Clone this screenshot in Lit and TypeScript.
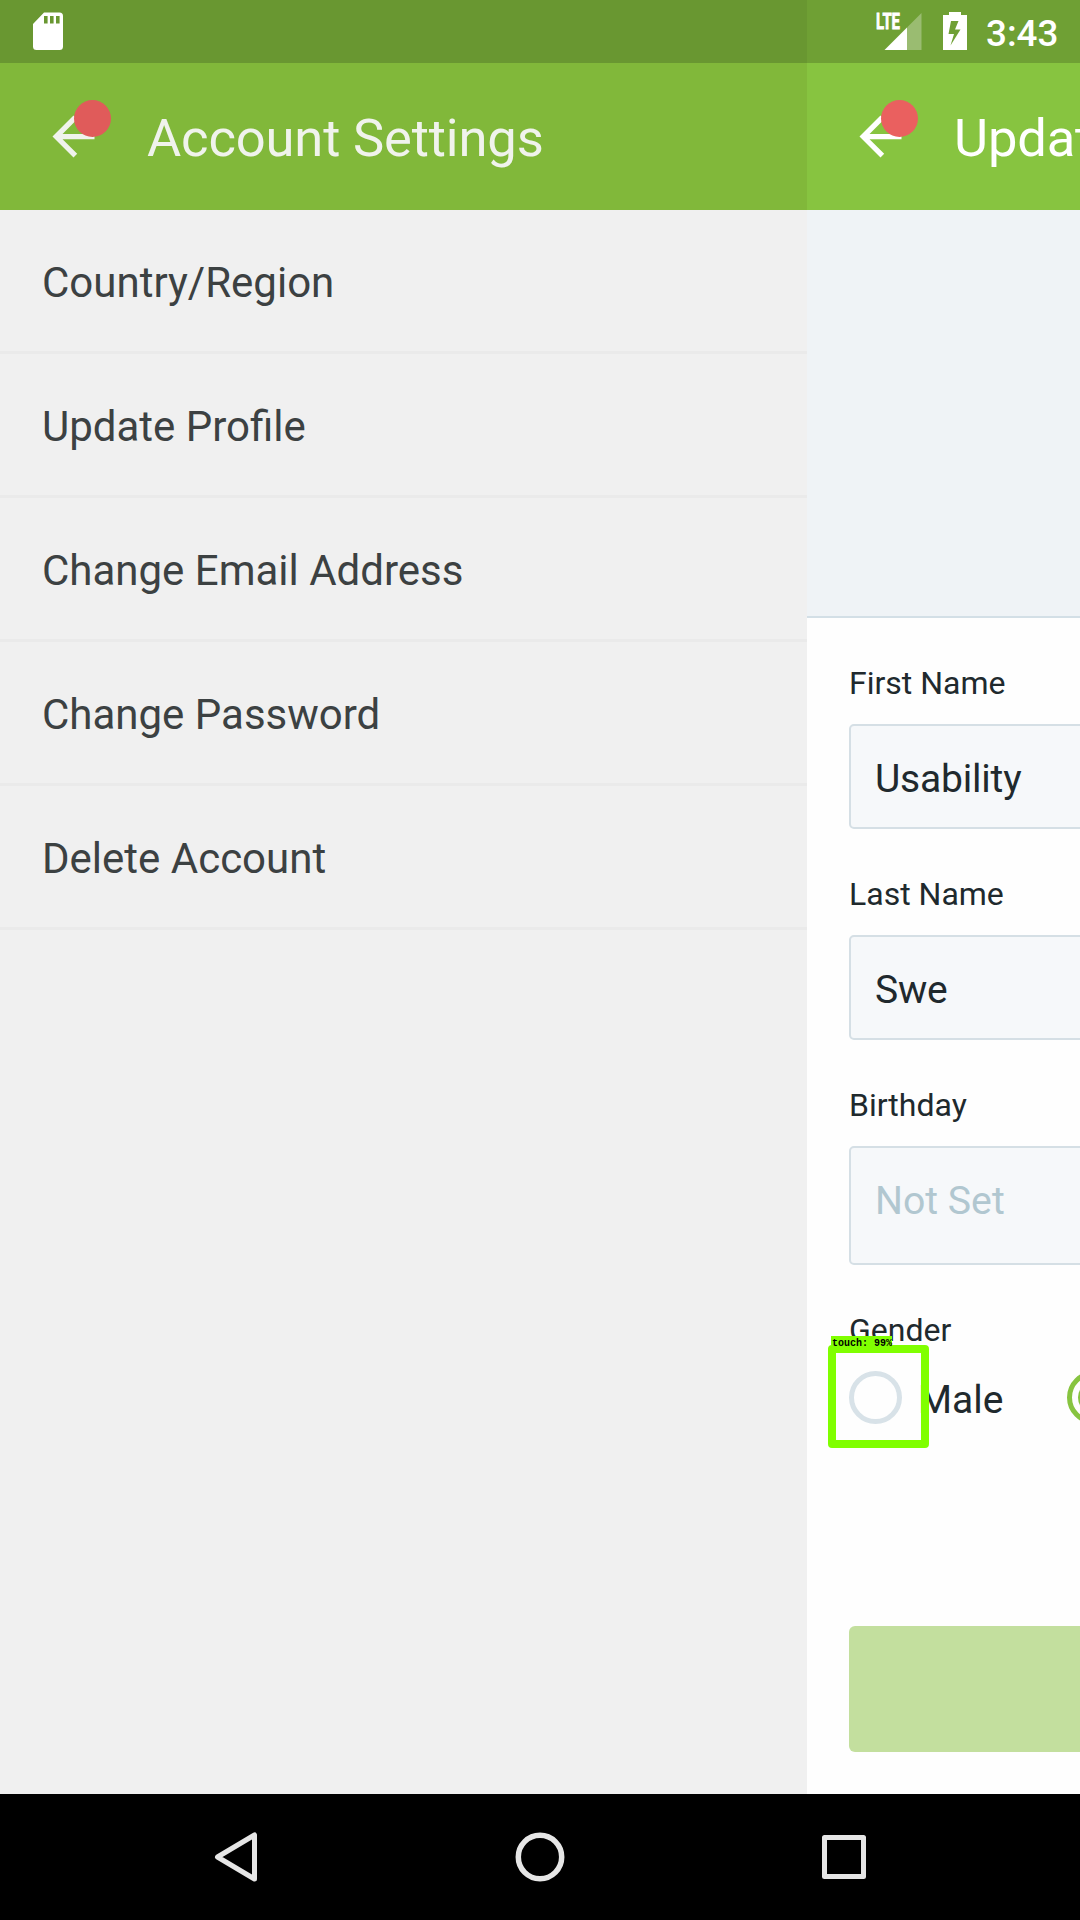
import { LitElement, html, css, svg } from "lit";
import { customElement, property } from "lit/decorators.js";

@customElement("app-header")
class AppHeader extends LitElement {
  @property() heading = "";

  static styles = css`
    :host { display: block; }
    .bar {
      display: flex;
      align-items: center;
      height: 147px;
      padding-left: 42px;
      box-sizing: border-box;
      background: var(--bar);
      color: var(--ink);
    }
    .back { position: relative; display: flex; width: 63px; height: 63px; margin-right: 42px; flex: none; }
    .badge {
      position: absolute;
      left: 32px;
      top: -5px;
      width: 37px;
      height: 37px;
      border-radius: 50%;
      background: var(--badge);
    }
    .title { font-size: 52.5px; line-height: 62px; letter-spacing: -0.15px; white-space: nowrap; padding-top: 3px; }
  `;

  render() {
    return html`
      <div class="bar">
        <div class="back">
          <svg width="63" height="63" viewBox="0 0 24 24">
            <path fill="currentColor" d="M20 11H7.83l5.59-5.59L12 4l-8 8 8 8 1.41-1.41L7.83 13H20v-2z" />
          </svg>
          <span class="badge"></span>
        </div>
        <span class="title">${this.heading}</span>
      </div>
    `;
  }
}

const ITEMS = ["Country/Region", "Update Profile", "Change Email Address", "Change Password", "Delete Account"];

const sdCard = svg`
  <path fill="#fff" fill-rule="evenodd"
    d="M11 .5H26.500Q30 .5 30 4V34.500Q30 38 26.500 38H3.500Q0 38 0 34.500V12ZM11 4V11.500H14.600V4ZM17 4V11.500H20.600V4ZM23 4V11.500H26.600V4Z" />`;

@customElement("app-root")
class AppRoot extends LitElement {
  static styles = css`
    :host {
      display: block;
      width: 1080px;
      height: 1920px;
      overflow: hidden;
      font-family: Roboto, "Liberation Sans", sans-serif;
    }
    .screen { display: flex; flex-direction: column; width: 1080px; height: 1920px; }
    .pages { display: grid; grid-template-columns: 807px 273px; height: 1794px; flex: none; }
    .page { display: flex; flex-direction: column; overflow: hidden; min-width: 0; }
    .settings { background: #f0f0f0; --bar: #81b83a; --ink: #f0f3ec; --badge: #e05b5a; }
    .profile { background: #fefefe; --bar: #87c440; --ink: #fff; --badge: #ea605f; }
    .status { display: flex; height: 63px; flex: none; box-sizing: border-box; }
    .status svg { flex: none; }
    .settings .status { background: #699731; padding: 12px 0 0 32.5px; }
    .profile .status { background: #6fa034; padding-left: 69px; }
    .signal { margin-right: 21px; }
    .clock { color: #fff; font-size: 36.75px; font-weight: 500; line-height: 68px; margin-left: 19px; }

    .item {
      height: 144px;
      box-sizing: border-box;
      border-bottom: 3px solid #eaeaea;
      padding: 49px 42px 0;
      font-size: 42px;
      line-height: 48px;
      color: #3c4142;
      white-space: nowrap;
    }

    .photo { height: 408px; flex: none; box-sizing: border-box; background: #eff3f6; border-bottom: 2px solid #d3dfe6; }
    .form { display: flex; flex-direction: column; padding-left: 42px; color: #20292d; white-space: nowrap; }
    .label { font-size: 32px; line-height: 37px; margin-top: 47px; margin-bottom: 22px; }
    .field {
      width: 400px;
      height: 105px;
      box-sizing: border-box;
      border: 2px solid #d5dfe5;
      border-radius: 5px;
      background: #f6f8fa;
      padding-left: 24px;
      font-size: 39px;
      line-height: 106px;
    }
    .field.name { letter-spacing: -0.2px; }
    .field.date { height: 119px; color: #b1c7d0; font-size: 39.2px; }
    .choices { display: flex; align-items: center; height: 53px; position: relative; }
    .radio { width: 53px; height: 53px; box-sizing: border-box; border: 5px solid #d8e2e8; border-radius: 50%; flex: none; }
    .radio.on { border-color: #87c440; display: grid; place-items: center; }
    .radio.on::after { content: ""; width: 31px; height: 31px; border-radius: 50%; background: #87c440; }
    .choice { flex: none; font-size: 39px; line-height: 46px; width: 149px; margin-left: 16px; padding-top: 5px; }
    .submit { width: 400px; height: 126px; margin-top: 202px; border-radius: 6px; background: #c3df9e; }

    .touch {
      position: absolute;
      left: -21px;
      top: -26px;
      width: 101px;
      height: 103px;
      box-sizing: border-box;
      border: 8px solid #80ff00;
      border-radius: 4px;
    }
    .tag {
      position: absolute;
      left: -5px;
      top: -17px;
      width: 61px;
      height: 13px;
      box-sizing: border-box;
      padding-left: 1px;
      background: #80ff00;
      color: #000;
      font: bold 10px/15px "Liberation Mono", monospace;
    }

    .nav { flex: 1; background: #000; display: flex; align-items: center; justify-content: space-between; padding: 0 213px; }
    .nav svg { display: block; fill: none; stroke: #e6e6e6; stroke-linejoin: round; }
  `;

  render() {
    return html`
      <div class="screen">
        <div class="pages">
          <section class="page settings">
            <div class="status"><svg width="30" height="39">${sdCard}</svg></div>
            <app-header heading="Account Settings"></app-header>
            ${ITEMS.map((t) => html`<div class="item">${t}</div>`)}
          </section>
          <section class="page profile">
            <div class="status">
              <svg class="signal" width="46" height="63">
                <text x="0" y="29" textLength="24" lengthAdjust="spacingAndGlyphs" fill="#fff"
                  stroke="#fff" stroke-width=".8" font-size="22" font-weight="700">LTE</text>
                <path fill="#fff" fill-opacity=".3" d="M31 27.500 45.500 13V50H31Z" />
                <path fill="#fff" d="M8.500 50 31 27.500V50Z" />
              </svg>
              <svg width="24" height="63">
                <path fill="#fff" fill-rule="evenodd"
                  d="M6 12H18V15H24V50H0V15H6ZM8 21 5.500 34H11L7.500 45.500 17.500 29.500H12L15.500 21Z" />
              </svg>
              <span class="clock">3:43</span>
            </div>
            <app-header heading="Update Profile"></app-header>
            <div class="photo"></div>
            <div class="form">
              <div class="label">First Name</div>
              <div class="field name">Usability</div>
              <div class="label">Last Name</div>
              <div class="field name">Swe</div>
              <div class="label">Birthday</div>
              <div class="field date">Not Set</div>
              <div class="label">Gender</div>
              <div class="choices">
                <span class="radio"></span><span class="choice">Male</span>
                <span class="radio on"></span>
                <div class="touch"><span class="tag">touch: 99%</span></div>
              </div>
              <div class="submit"></div>
            </div>
          </section>
        </div>
        <nav class="nav">
          <svg width="46" height="54" viewBox="0 0 46 54"><path stroke-width="5" d="M41.500 5V49L4.500 27Z" /></svg>
          <svg width="54" height="54" viewBox="0 0 54 54"><circle stroke-width="5.500" cx="27" cy="27" r="21.700" /></svg>
          <svg width="46" height="46" viewBox="0 0 46 46"><rect stroke-width="5" x="3.500" y="3.500" width="39" height="39" /></svg>
        </nav>
      </div>
    `;
  }
}
